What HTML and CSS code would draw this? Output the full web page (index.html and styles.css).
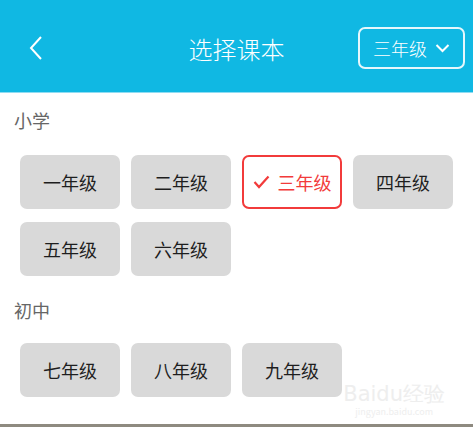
FILE: index.html
```
<!DOCTYPE html>
<html>
<head>
    <title>选择课本</title>
    <link rel="stylesheet" href="styles.css">
</head>
<body>
    <div class="page">
        <div class="header">
            <svg class="back" width="16" height="26" viewBox="0 0 16 26">
                <path d="M13 2 L3 13 L13 24" fill="none" stroke="#fff" stroke-width="2"/>
            </svg>
            <div class="title">选择课本</div>
            <div class="picker">
                <span>三年级</span>
                <svg width="15" height="10" viewBox="0 0 15 10">
                    <path d="M1.5 2 L7.5 8 L13.5 2" fill="none" stroke="#fff" stroke-width="2"/>
                </svg>
            </div>
        </div>
        <div class="content">
            <div class="section-title first">小学</div>
            <div class="grades">
                <div class="grade">一年级</div>
                <div class="grade">二年级</div>
                <div class="grade selected">
                    <svg width="17" height="14" viewBox="0 0 17 14">
                        <path d="M1.5 7 L6 12 L15.5 1.5" fill="none" stroke="#f23b3b" stroke-width="2.2"/>
                    </svg>
                    三年级
                </div>
                <div class="grade">四年级</div>
                <div class="grade">五年级</div>
                <div class="grade">六年级</div>
            </div>
            <div class="section-title">初中</div>
            <div class="grades">
                <div class="grade">七年级</div>
                <div class="grade">八年级</div>
                <div class="grade">九年级</div>
            </div>
        </div>
        <div class="watermark">
            <div class="wm-logo">Bai<span>du</span>经验</div>
            <div class="wm-url">jingyan.baidu.com</div>
        </div>
        <div class="bottom-strip"></div>
    </div>
</body>
</html>
```
FILE: styles.css
```
body {
    margin: 0;
    font-family: "Noto Sans CJK SC", "Noto Sans", sans-serif;
    background-color: #fff;
}

.page {
    position: relative;
    height: 427px;
    display: flex;
    flex-direction: column;
    overflow: hidden;
}

.header {
    height: 93px;
    background-color: #10b8e3;
    border-bottom: 1px solid #8fdcf2;
    display: flex;
    align-items: center;
    padding-top: 4px;
    box-sizing: border-box;
    position: relative;
}
.back {
    margin-left: 28px;
}
.title {
    position: absolute;
    left: 0;
    right: 0;
    top: 4px;
    bottom: 0;
    display: flex;
    align-items: center;
    justify-content: center;
    color: #fff;
    font-size: 24px;
    font-weight: 300;
    pointer-events: none;
}
.picker {
    margin-left: auto;
    margin-right: 8px;
    width: 107px;
    height: 42px;
    box-sizing: border-box;
    border: 2px solid #e6f7fc;
    border-radius: 7px;
    color: #fff;
    font-size: 18px;
    font-weight: 300;
    display: flex;
    align-items: center;
    justify-content: center;
    gap: 8px;
}

.content {
    padding: 0 20px;
}
.section-title {
    margin-left: -6px;
    color: #666;
    font-size: 18px;
    line-height: 24px;
    margin-top: 22px;
    margin-bottom: 21px;
}
.section-title.first {
    margin-top: 15px;
    margin-bottom: 23px;
}
.grades {
    display: grid;
    grid-template-columns: repeat(4, 100px);
    column-gap: 11px;
    row-gap: 13px;
}
.grade {
    height: 54px;
    box-sizing: border-box;
    background-color: #d9d9d9;
    border-radius: 7px;
    color: #1e1e1e;
    font-size: 18px;
    font-weight: 400;
    display: flex;
    align-items: center;
    justify-content: center;
    gap: 8px;
}
.grade.selected {
    background-color: #fff;
    border: 2px solid #f23b3b;
    color: #f23b3b;
}

.watermark {
    position: absolute;
    right: 28px;
    bottom: 9px;
    color: #eeeeee;
    text-align: center;
}
.wm-logo {
    font-family: "DejaVu Sans", sans-serif;
    font-size: 21px;
    line-height: 24px;
}
.wm-url {
    font-size: 9px;
    line-height: 12px;
}

.bottom-strip {
    margin-top: auto;
    height: 3px;
    background-color: #8e8a80;
}
```
